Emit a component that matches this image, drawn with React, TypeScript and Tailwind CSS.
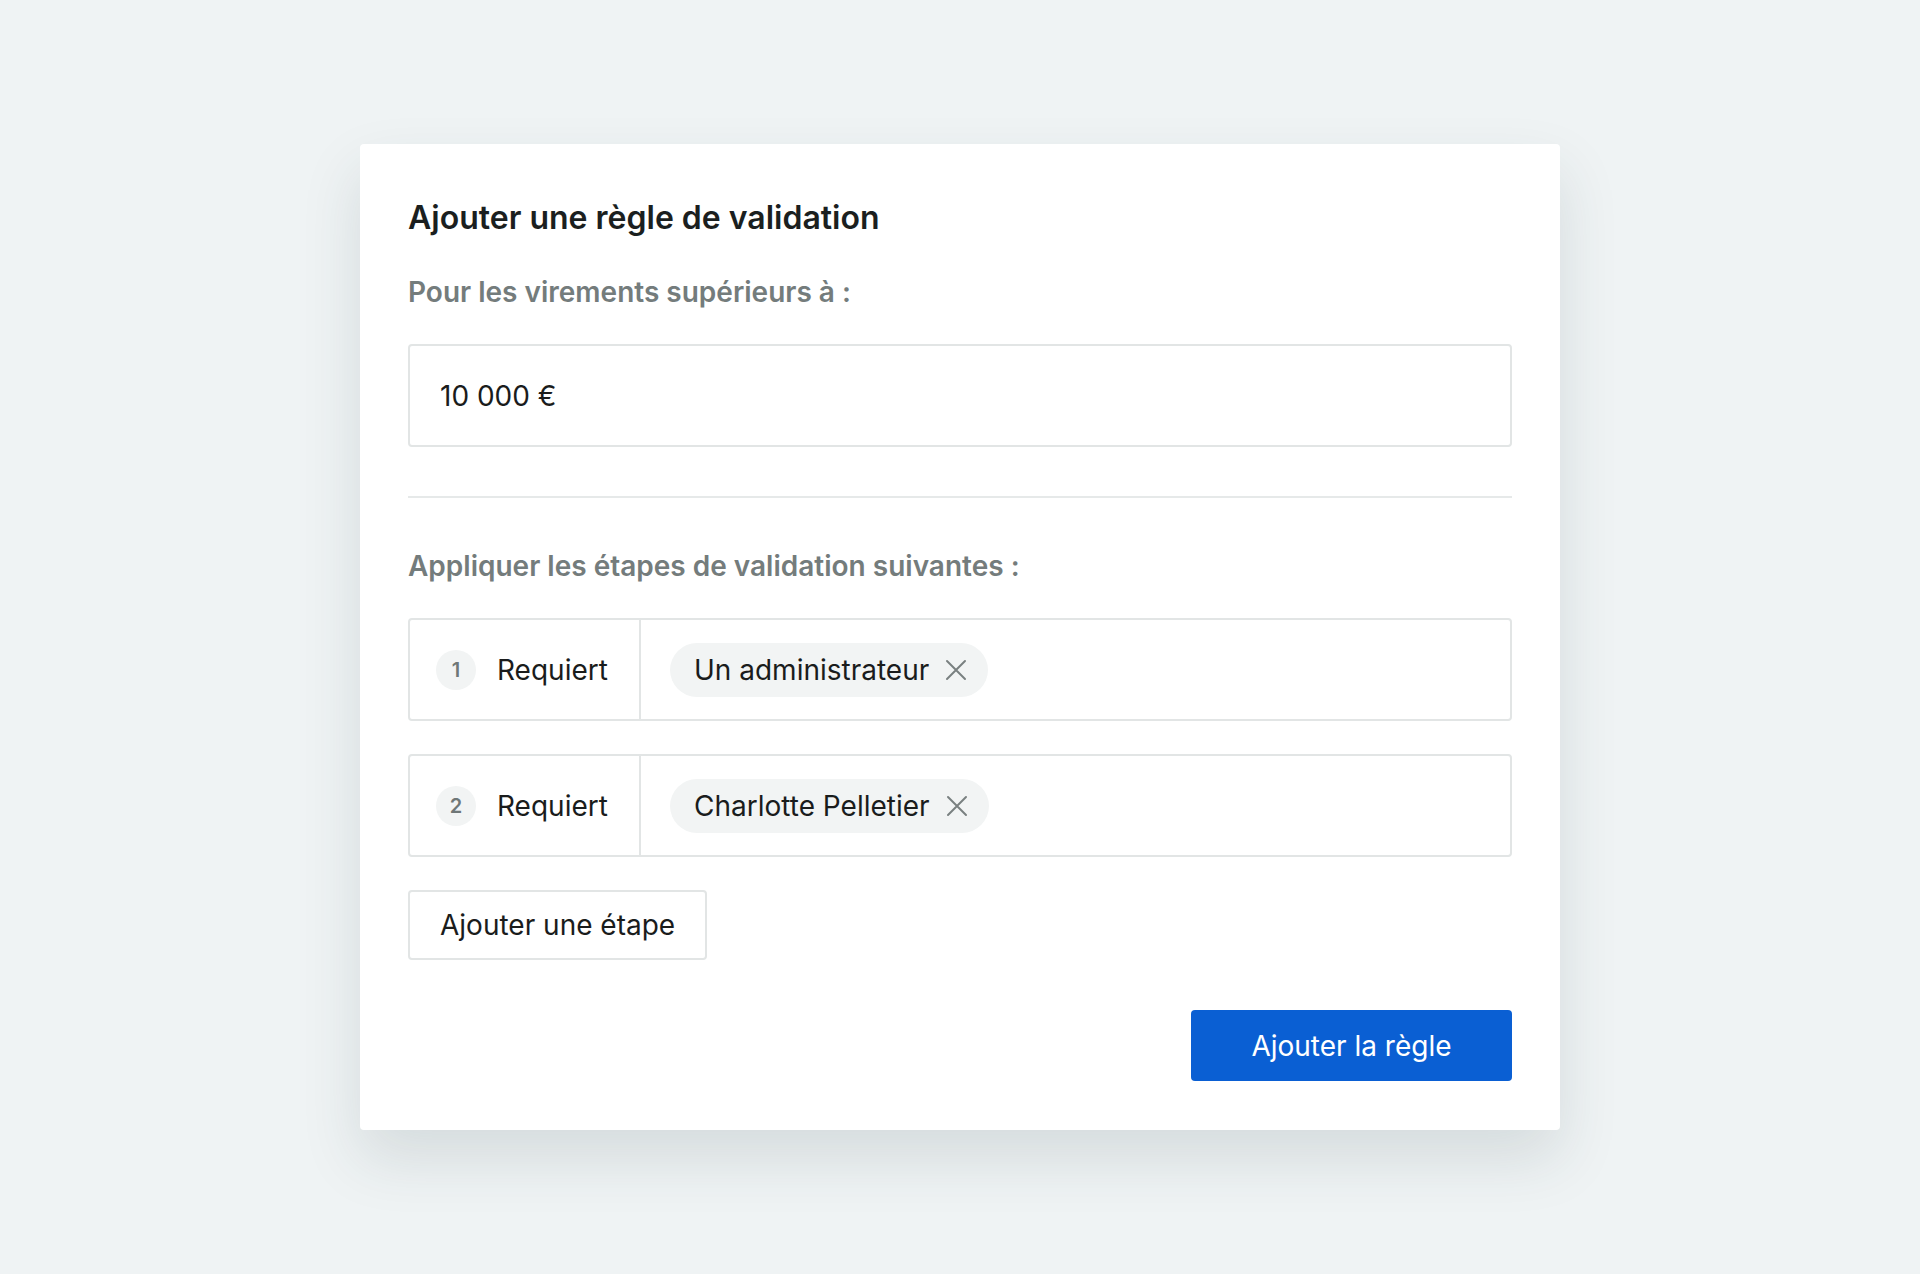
const steps = [
  { n: 1, who: 'Un administrateur' },
  { n: 2, who: 'Charlotte Pelletier' },
];

function CloseIcon() {
  return (
    <svg width="22" height="22" viewBox="0 0 22 22" className="text-[#7a8080]">
      <path d="M2 2L20 20M20 2L2 20" stroke="currentColor" strokeWidth="2" strokeLinecap="round" fill="none" />
    </svg>
  );
}

export default function App() {
  return (
    <div className="min-h-screen w-full overflow-hidden bg-[#eff3f4] font-['Inter',sans-serif] pt-[144px]">
      <div className="mx-auto w-[1200px] rounded bg-white px-12 pt-[54px] pb-[49px] shadow-[0_28px_60px_rgba(40,60,70,0.13)]">
        <h1 className="text-[32px] leading-[40px] font-semibold text-[#1b1f1f]">
          Ajouter une règle de validation
        </h1>

        <p className="mt-[36px] text-[28px] leading-[36px] font-semibold text-[#747c7c]">
          Pour les virements supérieurs à :
        </p>
        <div className="mt-[34px] flex h-[103px] items-center rounded border-2 border-[#e2e5e5] px-[30px] text-[28px] text-[#1a1c1c]">
          10 000 €
        </div>

        <div className="mt-[49px] h-[2px] bg-[#e6e9e9]" />

        <p className="mt-[50px] text-[28px] leading-[36px] font-semibold text-[#747c7c]">
          Appliquer les étapes de validation suivantes :
        </p>

        <div className="mt-[34px] flex flex-col gap-[33px]">
          {steps.map((s) => (
            <div key={s.n} className="flex h-[103px] rounded border-2 border-[#e2e5e5]">
              <div className="flex w-[231px] items-center border-r-2 border-[#e2e5e5] pl-[26px]">
                <span className="flex h-10 w-10 items-center justify-center rounded-full bg-[#f2f4f4] text-[20px] font-semibold text-[#6f7777]">
                  {s.n}
                </span>
                <span className="ml-[21px] text-[28px] text-[#1a1c1c]">Requiert</span>
              </div>
              <div className="flex items-center pl-[29px]">
                <div className="flex h-[54px] items-center gap-[16px] rounded-full bg-[#f2f4f4] pl-6 pr-[21px]">
                  <span className="text-[28px] text-[#1a1c1c]">{s.who}</span>
                  <CloseIcon />
                </div>
              </div>
            </div>
          ))}
        </div>

        <button className="mt-[33px] flex h-[70px] items-center rounded border-2 border-[#e2e5e5] bg-white px-[30px] text-[28px] text-[#1a1c1c]">
          Ajouter une étape
        </button>

        <div className="mt-[50px] flex justify-end">
          <button className="flex h-[71px] w-[321px] items-center justify-center rounded bg-[#0a5fd3] text-[28px] text-white">
            Ajouter la règle
          </button>
        </div>
      </div>
    </div>
  );
}
